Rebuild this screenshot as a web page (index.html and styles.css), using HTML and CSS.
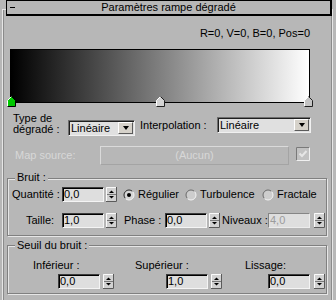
FILE: index.html
```html
<!DOCTYPE html>
<html lang="fr">
<head>
<meta charset="utf-8">
<title>Paramètres rampe dégradé</title>
<link rel="stylesheet" href="styles.css">
</head>
<body>
<svg class="defs" width="0" height="0" aria-hidden="true">
  <defs>
    <symbol id="spin" viewBox="0 0 11 15">
      <rect width="11" height="15" fill="#d2d2d2"/>
      <path d="M.5 14V.5H10" fill="none" stroke="#fafafa"/>
      <path d="M10.5 0V14.5H0" fill="none" stroke="#5a5a5a"/>
      <path d="M1 7.5H10" stroke="#7a7a7a"/>
      <path d="M3 6h5L5.5 3.5z" fill="#000"/>
      <path d="M3 9h5L5.5 11.5z" fill="#000"/>
    </symbol>
    <symbol id="radio-off" viewBox="0 0 12 12">
      <circle cx="6" cy="6" r="5" fill="#cdcdcd"/>
      <path d="M2.46 9.54A5 5 0 0 1 9.54 2.46" fill="none" stroke="#6a6a6a"/>
      <path d="M9.54 2.46A5 5 0 0 1 2.46 9.54" fill="none" stroke="#f4f4f4"/>
    </symbol>
    <symbol id="radio-on" viewBox="0 0 12 12">
      <circle cx="6" cy="6" r="5" fill="#d6d6d6"/>
      <path d="M2.46 9.54A5 5 0 0 1 9.54 2.46" fill="none" stroke="#2a2a2a"/>
      <path d="M9.54 2.46A5 5 0 0 1 2.46 9.54" fill="none" stroke="#f4f4f4"/>
      <circle cx="6" cy="6" r="2" fill="#000"/>
    </symbol>
  </defs>
</svg>

<div class="panel">
  <div class="header">
    <span class="minus"></span>
    <span class="title">Paramètres rampe dégradé</span>
    <span></span>
  </div>

  <div class="info">R=0, V=0, B=0, Pos=0</div>

  <div class="ramp">
    <svg class="flag flag-a" width="9" height="11" viewBox="0 0 9 11">
      <path d="M.5 10.5V4.5L4.5.5 8.5 4.5V10.5Z" fill="#00c800"/>
      <path d="M.5 10.5V4.5L4.5.5" fill="none" stroke="#fff"/>
      <path d="M4.5.5 8.5 4.5V10.5H.5" fill="none" stroke="#000"/>
    </svg>
    <svg class="flag flag-b" width="9" height="11" viewBox="0 0 9 11">
      <path d="M.5 10.5V4.5L4.5.5 8.5 4.5V10.5Z" fill="#d4d4d4"/>
      <path d="M.5 10.5V4.5L4.5.5" fill="none" stroke="#fff"/>
      <path d="M4.5.5 8.5 4.5V10.5H.5" fill="none" stroke="#202020"/>
    </svg>
    <svg class="flag flag-c" width="9" height="11" viewBox="0 0 9 11">
      <path d="M.5 10.5V4.5L4.5.5 8.5 4.5V10.5Z" fill="#c4c4c4"/>
      <path d="M.5 10.5V4.5L4.5.5" fill="none" stroke="#fff"/>
      <path d="M4.5.5 8.5 4.5V10.5H.5" fill="none" stroke="#202020"/>
    </svg>
  </div>

  <div class="row type-row">
    <div class="type-lbl">Type de<br>dégradé :</div>
    <div class="combo combo-type">
      <span class="combo-text">Linéaire</span>
      <span class="combo-btn"><span class="tri"></span></span>
    </div>
    <div class="interp-lbl">Interpolation :</div>
    <div class="combo combo-interp">
      <span class="combo-text">Linéaire</span>
      <span class="combo-btn"><span class="tri"></span></span>
    </div>
  </div>

  <div class="row map-row">
    <div class="map-lbl">Map source:</div>
    <div class="btn-map">(Aucun)</div>
    <svg class="chk" width="14" height="14" viewBox="0 0 14 14">
      <rect width="14" height="14" fill="#c2c2c2"/>
      <path d="M.5 13.5V.5h13" fill="none" stroke="#7a7a7a"/>
      <path d="M13.5.5v13H.5" fill="none" stroke="#f0f0f0"/>
      <path d="M3.5 6.5 6 9l4.5-5" fill="none" stroke="#e6e6e6" stroke-width="2"/>
    </svg>
  </div>

  <div class="group bruit">
    <span class="legend">Bruit :</span>
    <div class="row q-row">
      <span class="q-lbl">Quantité :</span>
      <span class="edit">0,0</span>
      <svg class="spin"><use href="#spin"/></svg>
      <span class="radio r1"><svg class="rd"><use href="#radio-on"/></svg>Régulier</span>
      <span class="radio r2"><svg class="rd"><use href="#radio-off"/></svg>Turbulence</span>
      <span class="radio r3"><svg class="rd"><use href="#radio-off"/></svg>Fractale</span>
    </div>
    <div class="row t-row">
      <span class="t-lbl">Taille:</span>
      <span class="edit">1,0</span>
      <svg class="spin"><use href="#spin"/></svg>
      <span class="p-lbl">Phase :</span>
      <span class="edit">0,0</span>
      <svg class="spin"><use href="#spin"/></svg>
      <span class="n-lbl">Niveaux :</span>
      <span class="edit dis">4,0</span>
      <svg class="spin spin-r"><use href="#spin"/></svg>
    </div>
  </div>

  <div class="group seuil">
    <span class="legend">Seuil du bruit :</span>
    <div class="row s-labels">
      <span class="s-l1">Inférieur :</span>
      <span class="s-l2">Supérieur :</span>
      <span class="s-l3">Lissage:</span>
    </div>
    <div class="row s-spins">
      <span class="edit s-e1">0,0</span>
      <svg class="spin spin-m"><use href="#spin"/></svg>
      <span class="edit s-e2">1,0</span>
      <svg class="spin spin-m"><use href="#spin"/></svg>
      <span class="edit s-e3">0,0</span>
      <svg class="spin spin-r"><use href="#spin"/></svg>
    </div>
  </div>
</div>
</body>
</html>
```

FILE: styles.css
```css
* { box-sizing: border-box; }

body {
  margin: 0;
  width: 336px;
  height: 300px;
  overflow: hidden;
  background: #b7b7b7;
  font-family: "Liberation Sans", Arial, sans-serif;
  font-size: 11px;
  line-height: 13px;
  color: #000;
}

.defs { position: absolute; width: 0; height: 0; }

.panel {
  margin: 9px 3px 0 2px;
  height: 291px;
  border-top: 1px solid #e6e6e6;
  border-left: 1px solid #e6e6e6;
  border-right: 1px solid #e6e6e6;
  box-shadow: inset 1px 0 #8a8a8a, inset -1px 0 #8a8a8a;
}

.header {
  margin: -10px 0 0 3px;
  height: 16px;
  border-style: solid;
  border-color: #000;
  border-width: 1px 2px 2px 1px;
  background: #b7b7b7;
  display: grid;
  grid-template-columns: 1fr auto 1fr;
  align-items: center;
}

.minus {
  width: 5px;
  height: 1px;
  background: #000;
  margin-left: 3px;
}

.title { line-height: 13px; }

.info {
  margin-top: 11px;
  text-align: right;
  padding-right: 22px;
}

.ramp {
  position: relative;
  margin: 9px 0 0 7px;
  width: 300px;
  height: 54px;
  border: 1px solid #000;
  background: linear-gradient(to right, #000, #fff);
}

.flag { position: absolute; top: 46px; display: block; }
.flag-a { left: -4px; }
.flag-b { left: 145px; }
.flag-c { left: 293px; }

.row { display: flex; }

.type-row { align-items: flex-start; }

.type-lbl {
  margin: 10px 0 0 10px;
  width: 55px;
  line-height: 11px;
}

.combo {
  display: flex;
  height: 16px;
  border: 1px solid;
  border-color: #6e6e6e #f0f0f0 #f0f0f0 #6e6e6e;
  box-shadow: inset 1px 1px #1e1e1e;
  background: #e0e0e0;
}

.combo-text {
  flex: 1;
  padding-left: 2px;
  line-height: 14px;
}

.combo-btn {
  width: 15px;
  margin: 1px 1px 1px 0;
  background: #d6d2ca;
  border: 1px solid;
  border-color: #fff #5a5a5a #5a5a5a #fff;
  display: flex;
  align-items: center;
  justify-content: center;
}

.tri {
  width: 0;
  height: 0;
  border-left: 3px solid transparent;
  border-right: 3px solid transparent;
  border-top: 4px solid #000;
}

.combo-type { margin-top: 17px; width: 67px; }

.interp-lbl {
  margin: 14px 0 0 5px;
  width: 77px;
  line-height: 16px;
}

.combo-interp { margin-top: 14px; width: 94px; }

.map-row {
  margin-top: 10px;
  height: 19px;
  align-items: center;
}

.map-lbl {
  margin-left: 12px;
  width: 85px;
  color: #d8d8d8;
}

.btn-map {
  width: 189px;
  height: 19px;
  border: 1px solid;
  border-color: #dadada #a4a4a4 #a4a4a4 #dadada;
  text-align: center;
  line-height: 17px;
  color: #d8d8d8;
}

.chk {
  margin-left: 7px;
  align-self: flex-start;
  margin-top: 1px;
}

.group {
  position: relative;
  margin-left: 4px;
  width: 320px;
  border: 1px solid #808080;
  box-shadow: inset 1px 1px #e6e6e6, 1px 1px #e6e6e6;
}

.legend {
  position: absolute;
  left: 7px;
  top: -8px;
  padding: 0 2px;
  background: #b7b7b7;
  line-height: 13px;
}

.bruit { margin-top: 13px; }
.seuil { margin-top: 9px; }
.seuil .legend { top: -7px; }

.q-row {
  margin-top: 8px;
  height: 15px;
  align-items: center;
}

.q-lbl { margin-left: 4px; width: 50px; }

.edit {
  width: 42px;
  height: 15px;
  border: 1px solid;
  border-color: #3c3c3c #f4f4f4 #f4f4f4 #3c3c3c;
  box-shadow: inset 1px 1px #000;
  background: #dedede;
  padding-left: 1px;
  line-height: 13px;
}

.edit.dis {
  border-color: #858585 #ececec #ececec #858585;
  box-shadow: none;
  color: #9c9c9c;
}

.spin {
  display: block;
  width: 11px;
  height: 15px;
  margin-left: 2px;
  flex: none;
}

.spin-m { margin-left: 3px; }
.spin-r { margin-left: 4px; }

.radio { display: flex; align-items: center; }

.rd {
  width: 12px;
  height: 12px;
  margin-right: 3px;
  flex: none;
}

.r1 { margin-left: 6px; width: 62px; }
.r2 { width: 77px; }

.t-row {
  margin: 11px 0 7px;
  height: 15px;
  align-items: center;
}

.t-lbl { margin-left: 18px; width: 36px; }
.p-lbl { margin-left: 7px; width: 41px; }
.n-lbl { margin-left: 2px; width: 46px; }

.s-labels { margin-top: 13px; }
.s-l1 { margin-left: 25px; width: 102px; }
.s-l2 { width: 110px; }

.s-spins {
  margin: 2px 0 4px;
  height: 15px;
}

.s-e1 { margin-left: 50px; }
.s-e2 { margin-left: 52px; }
.s-e3 { margin-left: 46px; }
```
